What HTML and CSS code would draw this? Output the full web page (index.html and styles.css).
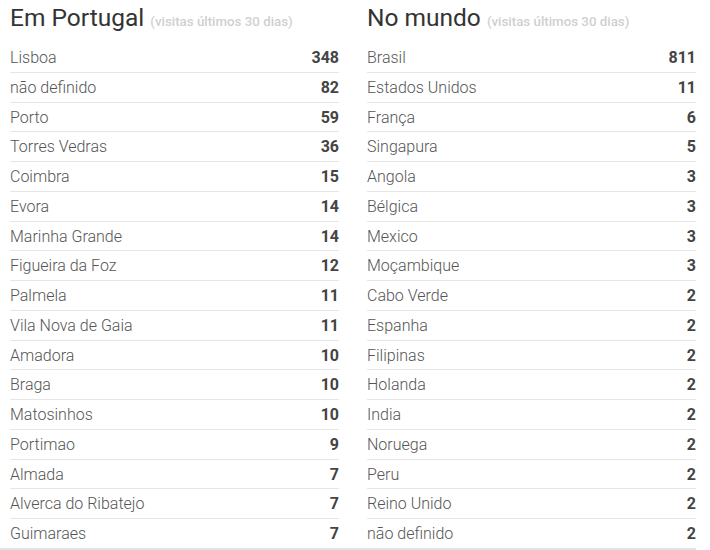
FILE: index.html
```html
<!DOCTYPE html>
<html lang="pt">
<head>
  <meta charset="UTF-8" />
  <meta name="viewport" content="width=device-width, initial-scale=1.0" />
  <title>Visitas</title>
  <link rel="stylesheet" href="styles.css">
</head>
<body>

<div class="stats">
  <div class="col">
    <h2>Em Portugal <small>(visitas últimos 30 dias)</small></h2>
    <table>
      <tr><td>Lisboa</td><td class="num">348</td></tr>
      <tr><td>não definido</td><td class="num">82</td></tr>
      <tr><td>Porto</td><td class="num">59</td></tr>
      <tr><td>Torres Vedras</td><td class="num">36</td></tr>
      <tr><td>Coimbra</td><td class="num">15</td></tr>
      <tr><td>Evora</td><td class="num">14</td></tr>
      <tr><td>Marinha Grande</td><td class="num">14</td></tr>
      <tr><td>Figueira da Foz</td><td class="num">12</td></tr>
      <tr><td>Palmela</td><td class="num">11</td></tr>
      <tr><td>Vila Nova de Gaia</td><td class="num">11</td></tr>
      <tr><td>Amadora</td><td class="num">10</td></tr>
      <tr><td>Braga</td><td class="num">10</td></tr>
      <tr><td>Matosinhos</td><td class="num">10</td></tr>
      <tr><td>Portimao</td><td class="num">9</td></tr>
      <tr><td>Almada</td><td class="num">7</td></tr>
      <tr><td>Alverca do Ribatejo</td><td class="num">7</td></tr>
      <tr><td>Guimaraes</td><td class="num">7</td></tr>
    </table>
  </div>

  <div class="col">
    <h2>No mundo <small>(visitas últimos 30 dias)</small></h2>
    <table>
      <tr><td>Brasil</td><td class="num">811</td></tr>
      <tr><td>Estados Unidos</td><td class="num">11</td></tr>
      <tr><td>França</td><td class="num">6</td></tr>
      <tr><td>Singapura</td><td class="num">5</td></tr>
      <tr><td>Angola</td><td class="num">3</td></tr>
      <tr><td>Bélgica</td><td class="num">3</td></tr>
      <tr><td>Mexico</td><td class="num">3</td></tr>
      <tr><td>Moçambique</td><td class="num">3</td></tr>
      <tr><td>Cabo Verde</td><td class="num">2</td></tr>
      <tr><td>Espanha</td><td class="num">2</td></tr>
      <tr><td>Filipinas</td><td class="num">2</td></tr>
      <tr><td>Holanda</td><td class="num">2</td></tr>
      <tr><td>India</td><td class="num">2</td></tr>
      <tr><td>Noruega</td><td class="num">2</td></tr>
      <tr><td>Peru</td><td class="num">2</td></tr>
      <tr><td>Reino Unido</td><td class="num">2</td></tr>
      <tr><td>não definido</td><td class="num">2</td></tr>
    </table>
  </div>
</div>

</body>
</html>
```

FILE: styles.css
```css
body {
  margin: 0;
  padding: 0;
  font-family: 'Roboto', 'Liberation Sans', sans-serif;
  background-color: #ffffff;
  color: #555;
  overflow: hidden;
}

.stats {
  display: grid;
  grid-template-columns: 329px 329px;
  column-gap: 28px;
  padding-left: 10px;
  width: 686px;
  border-bottom: 3px solid #e2e2e2;
}

h2 {
  margin: 0;
  height: 43px;
  padding-top: 3px;
  box-sizing: border-box;
  font-size: 24.5px;
  font-weight: 400;
  color: #333;
  line-height: 30px;
  white-space: nowrap;
}

h2 small {
  font-size: 13.3px;
  font-weight: 500;
  color: #d0d0d0;
}

table {
  width: 100%;
  border-collapse: collapse;
}

td {
  padding: 5px 0 3px;
  line-height: 20.75px;
  font-size: 16px;
  font-weight: 300;
  color: #555;
  border-bottom: 1px solid #e6e6e6;
}

tr:last-child td {
  border-bottom: none;
}

td.num {
  text-align: right;
  font-weight: 700;
  color: #444;
}
```
